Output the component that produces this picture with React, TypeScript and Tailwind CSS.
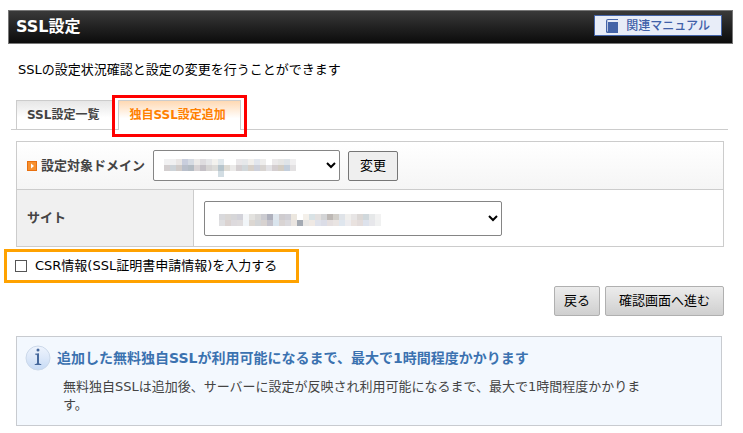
import { useState } from "react";
import type { ReactNode } from "react";

// Cell colours of the masked values, one row per line. "" leaves a cell empty.
const domainMask = [
  ["#f1f1f2", "#f0f0f1", "#e9e6e5", "#c9cedd", "#d6dbe3", "#eceae9", "#dedcdf", "#e6e7e9", "#f3f2ee", "#e0e8ec", "", "", "#eae8ea", "#e6e8ea", "#f1efec", "#e2e6ed", "#eeedec", "", "#ebe9ea", "#e6e6e5", "#dfe4e8", "#f0eff0"],
  ["#d3cfd0", "#cdd3d8", "#d0cbc9", "#b9bfcb", "#b4bcc4", "#d8d3d5", "#c4c0c6", "#d6d4d3", "#dcdcd9", "#b7c5cc", "#dedbd4", "#ebeae9", "#d4cfd1", "#d1d7da", "#d7d0c9", "#cdd0da", "#d8d4d1", "#e3e2e5", "#d4ced0", "#d3cdc4", "#c3cedb", "#e3e1e2"],
  ["", "", "", "", "", "", "", "", "", "#d2dde3", "", "", "", "", "", "", "", "", "", "", "", ""],
];

const siteMask = [
  ["#d9d9dc", "#dad7d5", "#d6d6d8", "#d2d2d9", "#f4f6f8", "#e3e2df", "#d8d7d6", "#cbcbd0", "#aeb0bc", "#dfe6ed", "#cfcccf", "#d0cfd5", "#ece7df", "", "#f4f0ea", "#d9e2e5", "#e3e0df", "#d3d4d6", "#bdb8b5", "#d2cfca", "#dfe3e8", "#f0efed", "#e7e5e5", "#dcd8d6", "#d0d8dc", "#e6e8e9", "#f2f2f2"],
  ["#dfdfe1", "#dbd3d1", "#dddadd", "#dfdcdd", "#f1f5f8", "#dcd7d2", "#d3d5d7", "#d7d2d0", "#c4c3cc", "#d9e4ed", "#d9d4d3", "#dad9dd", "#eae5e1", "#a4aab3", "#e9e7e5", "#efe9e4", "#dfe2eb", "#dbdde7", "#e5dfdf", "#e9e4e2", "#dfe6ee", "#edecef", "#e9e2df", "#e3dcdb", "#dde2ec", "#e7e7eb", "#f0f1f1"],
];

function Mask({ rows, className }: { rows: string[][]; className: string }) {
  return (
    <svg
      aria-hidden="true"
      width={rows[0].length * 6}
      height={rows.length * 6}
      shapeRendering="crispEdges"
      className={`pointer-events-none absolute ${className}`}
    >
      {rows.map((row, y) =>
        row.map((fill, x) =>
          fill ? <rect key={`${x}-${y}`} x={x * 6} y={y * 6} width="6" height="6" fill={fill} /> : null
        )
      )}
    </svg>
  );
}

function BookIcon() {
  return (
    <svg width="12" height="14" viewBox="0 0 12 14" aria-hidden="true" className="shrink-0">
      <path d="M2 0H12V1H2.500Q1 1 1 2V12.500H2V14H1.500Q0 14 0 12.500V2Q0 0 2 0Z" fill="#4464a8" />
      <path d="M2 3H12V14H2Z" fill="#4464a8" />
      <path d="M0 2H1.300V13H0Z" fill="#4464a8" />
    </svg>
  );
}

function ArrowIcon() {
  return (
    <svg width="10" height="10" viewBox="0 0 10 10" aria-hidden="true" className="shrink-0">
      <rect width="10" height="10" fill="#e8700f" />
      <rect x="1" y="1" width="8" height="8" fill="#f7902f" />
      <path d="M4 2.500L7 5L4 7.500Z" fill="#fff" />
    </svg>
  );
}

function InfoIcon() {
  return (
    <svg width="26" height="26" viewBox="0 0 26 26" aria-hidden="true" className="shrink-0">
      <defs>
        <linearGradient id="info" x1="0" y1="0" x2="0" y2="1">
          <stop offset="0" stopColor="#eef4fd" />
          <stop offset="0.5" stopColor="#dce8f9" />
          <stop offset="1" stopColor="#c6daf5" />
        </linearGradient>
      </defs>
      <circle cx="13" cy="13" r="12" fill="url(#info)" stroke="#ccd9ea" />
      <circle cx="13" cy="5" r="1.500" fill="#45689c" />
      <path
        d="M10 8.800L14 8.300V18Q14 19 16.300 19.200V20H9.700V19.200Q12 19 12 18V10.500Q12 9.600 10 9.600Z"
        fill="#45689c"
      />
    </svg>
  );
}

function FormButton({ children, className }: { children: ReactNode; className: string }) {
  return (
    <button
      type="button"
      className={`h-[30px] rounded-xs border border-[#b0b0b0] bg-linear-to-b from-[#ececec] to-[#cfcfcf] text-black ${className}`}
    >
      {children}
    </button>
  );
}

export default function App() {
  const [csr, setCsr] = useState(false);

  return (
    <div className="bg-white pt-[10px] pb-2 font-['DejaVu_Sans','Noto_Sans_CJK_JP',sans-serif] text-[13px] leading-[18px] text-black">
      <header className="mr-[10px] ml-2 flex h-[34px] items-start justify-between border border-[#777] bg-linear-to-b from-[#3a3a3a] to-[#0c0c0c] pr-[10px] pl-[7px]">
        <h1 className="text-base leading-8 font-bold text-white">SSL設定</h1>
        <a
          href="#manual"
          className="mt-1 flex h-[21px] items-center gap-2 border border-[#4464a8] bg-[#e8edf8] px-[11px] text-xs font-medium text-[#4060a8]"
        >
          <BookIcon />
          関連マニュアル
        </a>
      </header>

      <p className="mt-[17px] px-[18px]">SSLの設定状況確認と設定の変更を行うことができます</p>

      <nav className="mt-[21px] mr-[15px] ml-[11px] flex gap-1 border-b border-[#ccc] pl-[5px] text-xs leading-[18px] font-bold">
        <a
          href="#list"
          className="border-x border-t border-[#ccc] bg-linear-to-b from-[#e6e6e6] to-white to-60% py-[5px] pr-[14px] pl-[10px] text-[#444]"
        >
          SSL設定一覧
        </a>
        <a
          href="#add"
          aria-current="page"
          className="relative -mb-px border-x border-t border-[#ccc] bg-linear-to-b from-[#ffd9b3] to-white to-60% py-[5px] pr-[14px] pl-[10px] text-[#ff8000]"
        >
          独自SSL設定追加
          <span className="pointer-events-none absolute -inset-x-[7px] -top-[6px] -bottom-[7px] border-3 border-[#fe0000]" />
        </a>
      </nav>

      <main className="pr-[19px] pl-4 text-[#444]">
        <table className="mt-[11px] w-full border-collapse border border-[#ccc]">
          <tbody>
            <tr className="h-12 bg-linear-to-b from-white to-[#f5f5f5]">
              <td colSpan={2} className="border border-[#ccc] px-[10px] align-middle">
                <div className="flex items-center gap-2">
                  <div className="flex items-center gap-1">
                    <ArrowIcon />
                    <label htmlFor="domain" className="font-bold">
                      設定対象ドメイン
                    </label>
                  </div>
                  <div className="relative">
                    <select
                      id="domain"
                      className="block h-[31px] w-[187px] rounded-xs border border-[#858585] bg-white px-1 text-black"
                    >
                      <option value=""></option>
                    </select>
                    <Mask rows={domainMask} className="top-[9px] left-[11px]" />
                  </div>
                  <button
                    type="button"
                    className="h-[30px] w-[50px] rounded-xs border border-[#767676] bg-[#efefef] text-black"
                  >
                    変更
                  </button>
                </div>
              </td>
            </tr>
            <tr className="h-[57px]">
              <th className="w-1/4 border border-[#ccc] bg-[#f0f0f0] px-[10px] text-left font-bold">
                <label htmlFor="site">サイト</label>
              </th>
              <td className="border border-[#ccc] px-[10px] align-middle">
                <div className="relative w-fit">
                  <select
                    id="site"
                    className="block h-[35px] w-[298px] rounded-xs border border-[#858585] bg-white px-1 text-black"
                  >
                    <option value=""></option>
                  </select>
                  <Mask rows={siteMask} className="top-[13px] left-[15px]" />
                </div>
              </td>
            </tr>
          </tbody>
        </table>

        <label className="mt-[2px] -ml-3 flex h-[34px] w-fit items-center gap-2 border-3 border-[#ffa200] pr-[19px] pl-2 text-black">
          <input
            type="checkbox"
            checked={csr}
            onChange={(e) => setCsr(e.target.checked)}
            className="size-3 appearance-none border border-[#555] bg-white checked:bg-[#0075ff]"
          />
          CSR情報(SSL証明書申請情報)を入力する
        </label>

        <div className="mt-[3px] flex justify-end gap-[5px]">
          <FormButton className="px-[9px]">戻る</FormButton>
          <FormButton className="px-[13px]">確認画面へ進む</FormButton>
        </div>

        <section className="mt-5 mr-[2px] flex gap-[6px] border border-[#c8cbd0] bg-[#f3f8fe] pt-2 pb-[11px] pl-2">
          <InfoIcon />
          <div className="pr-[70px]">
            <h2 className="text-sm leading-[26px] font-bold text-[#3b72b0]">
              追加した無料独自SSLが利用可能になるまで、最大で1時間程度かかります
            </h2>
            <p className="mt-[7px] pl-[6px]">
              無料独自SSLは追加後、サーバーに設定が反映され利用可能になるまで、最大で1時間程度かかります。
            </p>
          </div>
        </section>
      </main>
    </div>
  );
}
